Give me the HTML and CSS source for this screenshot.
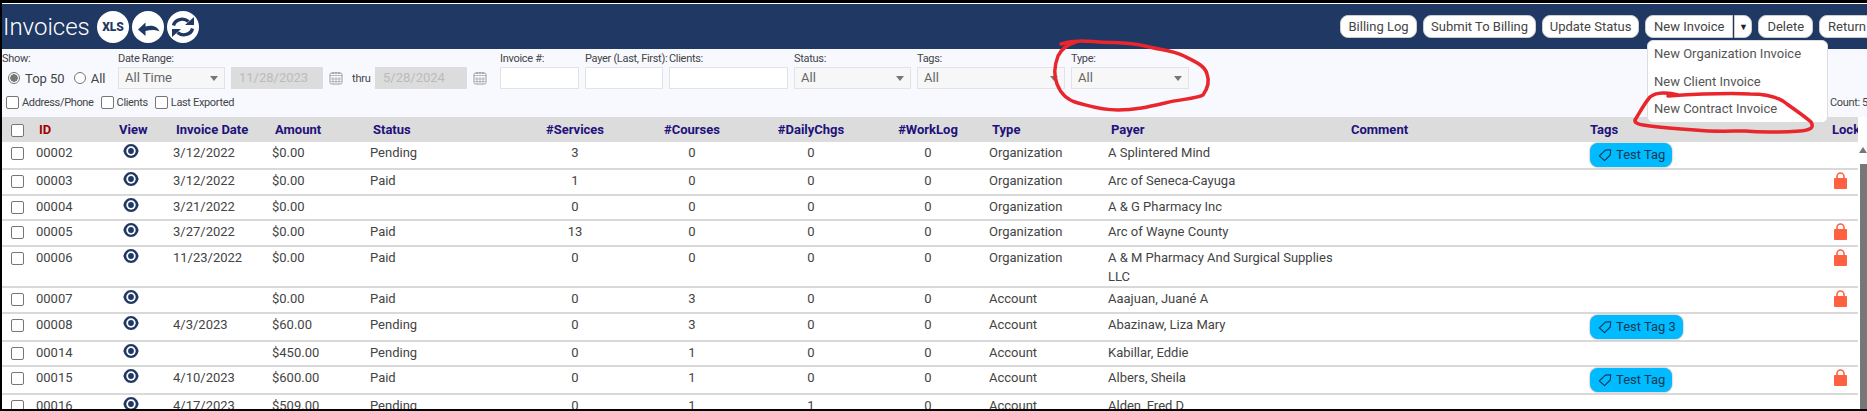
FILE: index.html
```html
<!DOCTYPE html>
<html lang="en">
<head>
    <meta charset="UTF-8">
    <title>Invoices</title>
    <link rel="stylesheet" href="styles.css">
</head>
<body>
    <svg width="0" height="0" class="defs">
        <symbol id="eye" viewBox="0 0 16 16">
            <path d="M8 1C3.800 1 1 4.600 .4 8 1 11.400 3.800 15 8 15s7-3.600 7.600-7C15 4.600 12.200 1 8 1z" fill="#1f3864"/>
            <circle cx="8" cy="8" r="4.700" fill="#fff"/>
            <circle cx="8" cy="8" r="2.900" fill="#1f3864"/>
        </symbol>
        <symbol id="lock" viewBox="0 0 13 17">
            <path d="M3 7V4.500a3.500 3.500 0 0 1 7 0V7" fill="none" stroke="#ff6040" stroke-width="1.600"/>
            <rect x="0" y="6" width="13" height="11" rx="1" fill="#ff6040"/>
        </symbol>
        <symbol id="tag" viewBox="0 0 16 16">
            <path d="M1.500 9 8.500 2.500 14.500 2 14 8 7.500 14.500z" fill="none" stroke="#123a52" stroke-width="1.300" stroke-linejoin="round"/>
        </symbol>
        <symbol id="cal" viewBox="0 0 14 14">
            <rect x="1" y="2" width="12" height="11" rx="1.500" fill="none" stroke="#999" stroke-width="1"/>
            <path d="M1 4.500h12M4 6v6M7 6v6M10 6v6M2 8h10M2 10.500h10" stroke="#aaa" stroke-width=".8"/>
            <path d="M4 1v2M7 1v2M10 1v2" stroke="#888" stroke-width="1"/>
        </symbol>
    </svg>

    <div class="frame">
        <header class="topbar">
            <h1>Invoices</h1>
            <span class="round-btn xls">XLS</span>
            <span class="round-btn">
                <svg width="32" height="32" viewBox="0 0 32 32"><path d="M6 18.500 13.500 11.500V15.500C19 14 25 14.500 27.500 20.500 23.500 18.500 19 18.500 13.500 20V25z" fill="#1f3864"/></svg>
            </span>
            <span class="round-btn">
                <svg width="32" height="32" viewBox="0 0 32 32"><path d="M6.500 14.500C8 8.500 16 6 21.500 10.500" fill="none" stroke="#1f3864" stroke-width="3.400"/><path d="M18 14H27V6z" fill="#1f3864"/><path d="M25.500 17.500C24 23.500 16 26 10.500 21.500" fill="none" stroke="#1f3864" stroke-width="3.400"/><path d="M14 18H5V26z" fill="#1f3864"/></svg>
            </span>
            <nav class="actions">
                <button class="btn b-log">Billing Log</button>
                <button class="btn b-submit">Submit To Billing</button>
                <button class="btn b-update">Update Status</button>
                <div class="split">
                    <button class="btn split-main">New Invoice</button>
                    <button class="btn split-arrow">▼</button>
                </div>
                <button class="btn">Delete</button>
                <button class="btn">Return</button>
            </nav>
        </header>

        <section class="filters">
            <div class="filter-row">
                <div class="field show-field">
                    <label>Show:</label>
                    <div class="radios">
                        <span class="radio on"></span><span class="radio-text">Top 50</span>
                        <span class="radio"></span><span class="radio-text">All</span>
                    </div>
                </div>
                <div class="field range-field">
                    <label>Date Range:</label>
                    <div class="range">
                        <div class="select range-select">All Time</div>
                        <div class="input disabled">11/28/2023</div>
                        <svg class="cal" width="14" height="14"><use href="#cal"/></svg>
                        <span class="thru">thru</span>
                        <div class="input disabled">5/28/2024</div>
                        <svg class="cal" width="14" height="14"><use href="#cal"/></svg>
                    </div>
                </div>
                <div class="field w-invoice"><label>Invoice #:</label><div class="input"></div></div>
                <div class="field w-payer"><label>Payer (Last, First):</label><div class="input"></div></div>
                <div class="field w-clients"><label>Clients:</label><div class="input"></div></div>
                <div class="field w-status"><label>Status:</label><div class="select">All</div></div>
                <div class="field w-tags"><label>Tags:</label><div class="select">All</div></div>
                <div class="field w-type"><label>Type:</label><div class="select">All</div></div>
            </div>
            <div class="extras">
                <span class="check"></span><span class="check-text">Address/Phone</span>
                <span class="check"></span><span class="check-text">Clients</span>
                <span class="check"></span><span class="check-text">Last Exported</span>
                <span class="count">Count: 5</span>
            </div>
        </section>

        <div class="table-wrap">
            <table class="grid">
                <colgroup>
                    <col class="c-check"><col class="c-id"><col class="c-view"><col class="c-date"><col class="c-amount">
                    <col class="c-status"><col class="c-services"><col class="c-courses"><col class="c-daily"><col class="c-worklog">
                    <col class="c-type"><col class="c-payer"><col class="c-comment"><col class="c-tags"><col class="c-lock">
                </colgroup>
                <thead>
                    <tr>
                        <th><span class="check"></span></th><th class="sorted">ID</th><th>View</th><th>Invoice Date</th><th>Amount</th><th>Status</th>
                        <th class="mid">#Services</th><th class="mid">#Courses</th><th class="mid">#DailyChgs</th><th class="mid">#WorkLog</th>
                        <th>Type</th><th>Payer</th><th>Comment</th><th>Tags</th><th>Lock</th>
                    </tr>
                </thead>
                <tbody id="rows"></tbody>
            </table>
            <div class="scrollbar"><span class="scroll-up"></span><span class="scroll-thumb"></span></div>
        </div>
    </div>

    <div class="menu">
        <a>New Organization Invoice</a>
        <a>New Client Invoice</a>
        <a>New Contract Invoice</a>
    </div>

    <svg class="marker" width="1867" height="411" viewBox="0 0 1867 411">
        <path d="M1061 44C1072 40 1085 41 1100 42 1115 43 1130 42 1145 46 1160 50 1172 50 1184 56 1196 62 1205 66 1207 74 1210 82 1208 88 1203 95 1196 99 1180 99 1165 103 1148 107 1135 110 1118 110 1100 110 1090 106 1078 103 1066 100 1060 92 1057 84 1053 74 1055 64 1058 56 1062 48 1068 44 1076 42" fill="none" stroke="#e8262b" stroke-width="3.500" stroke-linecap="round"/>
        <path d="M1678 95C1668 92 1656 92 1650 97 1644 104 1640 112 1635 120 1634 124 1642 125 1650 126 1665 128 1680 129 1695 130 1715 132 1730 131 1745 131 1765 133 1785 132 1800 131 1812 130 1814 127 1811 122 1803 115 1795 110 1787 104 1778 96 1765 94 1750 94 1730 93 1700 94 1668 96" fill="none" stroke="#e8262b" stroke-width="3.500" stroke-linecap="round"/>
    </svg>

    <script>
        // h = row height in the grid
        const invoices = [
            { h: 27, id: '00002', date: '3/12/2022', amount: '$0.00', status: 'Pending', s: 3, c: 0, d: 0, w: 0, type: 'Organization', payer: 'A Splintered Mind', tag: 'Test Tag' },
            { h: 26, id: '00003', date: '3/12/2022', amount: '$0.00', status: 'Paid', s: 1, c: 0, d: 0, w: 0, type: 'Organization', payer: 'Arc of Seneca-Cayuga', lock: true },
            { h: 25, id: '00004', date: '3/21/2022', amount: '$0.00', status: '', s: 0, c: 0, d: 0, w: 0, type: 'Organization', payer: 'A & G Pharmacy Inc' },
            { h: 26, id: '00005', date: '3/27/2022', amount: '$0.00', status: 'Paid', s: 13, c: 0, d: 0, w: 0, type: 'Organization', payer: 'Arc of Wayne County', lock: true },
            { h: 41, id: '00006', date: '11/23/2022', amount: '$0.00', status: 'Paid', s: 0, c: 0, d: 0, w: 0, type: 'Organization', payer: 'A & M Pharmacy And Surgical Supplies LLC', lock: true },
            { h: 26, id: '00007', date: '', amount: '$0.00', status: 'Paid', s: 0, c: 3, d: 0, w: 0, type: 'Account', payer: 'Aaajuan, Juané A', lock: true },
            { h: 28, id: '00008', date: '4/3/2023', amount: '$60.00', status: 'Pending', s: 0, c: 3, d: 0, w: 0, type: 'Account', payer: 'Abazinaw, Liza Mary', tag: 'Test Tag 3' },
            { h: 25, id: '00014', date: '', amount: '$450.00', status: 'Pending', s: 0, c: 1, d: 0, w: 0, type: 'Account', payer: 'Kabillar, Eddie' },
            { h: 27, id: '00015', date: '4/10/2023', amount: '$600.00', status: 'Paid', s: 0, c: 1, d: 0, w: 0, type: 'Account', payer: 'Albers, Sheila', tag: 'Test Tag', lock: true },
            { h: 26, id: '00016', date: '4/17/2023', amount: '$509.00', status: 'Pending', s: 0, c: 1, d: 1, w: 0, type: 'Account', payer: 'Alden, Fred D' }
        ];

        function esc(text) {
            return text.replace(/&/g, '&amp;');
        }

        document.getElementById('rows').innerHTML = invoices.map(function(row) {
            const tag = row.tag ? `<span class="tag"><svg width="14" height="14"><use href="#tag"/></svg>${row.tag}</span>` : '';
            const lock = row.lock ? '<svg class="lock" width="13" height="17"><use href="#lock"/></svg>' : '';
            return `<tr style="height:${row.h}px">
                <td><span class="check"></span></td>
                <td>${row.id}</td>
                <td><svg class="eye" width="16" height="16"><use href="#eye"/></svg></td>
                <td>${row.date}</td><td>${row.amount}</td><td>${row.status}</td>
                <td class="mid">${row.s}</td><td class="mid">${row.c}</td><td class="mid">${row.d}</td><td class="mid">${row.w}</td>
                <td>${row.type}</td><td>${esc(row.payer)}</td><td></td>
                <td class="tag-cell">${tag}</td><td class="lock-cell">${lock}</td>
            </tr>`;
        }).join('');
    </script>
</body>
</html>
```

FILE: styles.css
```css
:root {
    --navy: #1f3864;
    --panel-bg: #f8f9ff;
    --text: #444;
    --line: #d9d9d9;
}

* {
    box-sizing: border-box;
}

html, body {
    margin: 0;
    padding: 0;
    height: 411px;
    overflow: hidden;
    background: #fff;
    color: var(--text);
    font-family: Roboto, 'Liberation Sans', sans-serif;
    font-size: 13px;
}

.defs {
    position: absolute;
}

.frame {
    height: 411px;
    border-top: 3px solid #000;
    border-left: 2px solid #000;
    border-bottom: 2px solid #000;
    padding-top: 1px;
    display: flex;
    flex-direction: column;
    overflow: hidden;
}

/* top bar */
.topbar {
    flex: 0 0 45px;
    background: var(--navy);
    display: flex;
    align-items: center;
    padding-left: 1px;
}

h1 {
    margin: 0 10px 0 0;
    color: #fff;
    font-size: 24px;
    font-weight: 300;
    width: 84px;
    white-space: nowrap;
}

.round-btn {
    width: 32px;
    height: 32px;
    margin-right: 3px;
    border-radius: 50%;
    background: #fff;
    display: flex;
    align-items: center;
    justify-content: center;
}

.xls {
    color: var(--navy);
    font-size: 12px;
    font-weight: 900;
}

.actions {
    margin-left: auto;
    margin-right: -8px;
    display: flex;
    gap: 6px;
    align-items: center;
}

.btn {
    height: 23px;
    padding: 0 8px;
    border: 1px solid #ccc;
    border-radius: 8px;
    background: #fff;
    color: var(--text);
    font: 13px Roboto, sans-serif;
    white-space: nowrap;
}

.b-log { width: 77px; padding: 0; }
.b-submit { width: 113px; padding: 0; }
.b-update { width: 97px; padding: 0; }

.split {
    display: flex;
    gap: 1px;
}

.split-main {
    border-radius: 8px 0 0 8px;
}

.split-arrow {
    width: 18px;
    padding: 0;
    border-radius: 0 8px 8px 0;
    color: #222;
    font-size: 9px;
}

/* filters */
.filters {
    flex: 0 0 68px;
    background: var(--panel-bg);
    padding: 3px 0 0 0;
}

.filter-row {
    display: flex;
    gap: 6px;
}

.field label {
    display: block;
    height: 15px;
    line-height: 14px;
    font-size: 11px;
    letter-spacing: -.3px;
    white-space: nowrap;
}

.show-field {
    width: 110px;
}

.range {
    display: flex;
    align-items: center;
}

.radios {
    display: flex;
    align-items: center;
    height: 22px;
    padding-left: 6px;
    font-size: 13px;
}

.radio {
    width: 12px;
    height: 12px;
    border: 1px solid #767676;
    border-radius: 50%;
    background: #fff;
}

.radio.on {
    background: radial-gradient(circle, #777 0 3.500px, #fff 4px);
}

.radio-text {
    margin: 0 9px 0 5px;
}

.radio-text:last-child {
    margin-right: 0;
}

.input, .select {
    height: 22px;
    border: 1px solid #e3e3e3;
    background: #fff;
    line-height: 20px;
}

.select {
    position: relative;
    padding-left: 6px;
    background: #f7f7f7;
    font-size: 13px;
    color: #666;
}

.select::after {
    content: "";
    position: absolute;
    right: 6px;
    top: 8px;
    border: 4px solid transparent;
    border-top: 5px solid #777;
    border-bottom: 0;
}

.range-select {
    width: 107px;
    margin-right: 6px;
}

.disabled {
    width: 92px;
    padding-left: 7px;
    background: #dcdcdc;
    border-color: #dcdcdc;
    color: #bbb;
    font-size: 13px;
}

.cal {
    margin: 0 5px 0 6px;
}

.thru {
    width: 23px;
    margin-left: 4px;
    font-size: 11px;
    letter-spacing: -.2px;
}

.range-field {
    width: 376px;
}

.w-invoice { width: 79px; }
.w-payer { width: 78px; }
.w-clients { width: 119px; }
.w-status { width: 117px; }
.w-tags { width: 148px; }
.w-type { width: 118px; }

.extras {
    margin-top: 5px;
    padding-left: 4px;
    display: flex;
    align-items: center;
    height: 16px;
    font-size: 11px;
    letter-spacing: -.35px;
}

.check {
    display: inline-block;
    width: 13px;
    height: 13px;
    border: 1px solid #767676;
    border-radius: 2px;
    background: #fff;
    vertical-align: top;
}

.check-text {
    margin: 0 7px 0 3px;
}

.count {
    margin-left: auto;
    width: 37px;
    white-space: nowrap;
}

/* grid */
.table-wrap {
    flex: 1;
    position: relative;
    overflow: hidden;
}

.grid {
    width: 1856px;
    table-layout: fixed;
    border-collapse: collapse;
}

.c-check { width: 31px; }
.c-id { width: 80px; }
.c-view { width: 57px; }
.c-date { width: 99px; }
.c-amount { width: 98px; }
.c-status { width: 151px; }
.c-services { width: 114px; }
.c-courses { width: 120px; }
.c-daily { width: 118px; }
.c-worklog { width: 116px; }
.c-type { width: 119px; }
.c-payer { width: 240px; }
.c-comment { width: 239px; }
.c-tags { width: 242px; }
.c-lock { width: 32px; }

th {
    height: 25px;
    background: #dcdcdc;
    color: #22107a;
    font-size: 13px;
    font-weight: 700;
    text-align: left;
    padding: 0 0 0 6px;
    white-space: nowrap;
    overflow: hidden;
}

th.sorted {
    color: #a00000;
}

th:first-child, td:first-child {
    padding-left: 9px;
}

th .check {
    vertical-align: middle;
}

td {
    padding: 2px 3px 0;
    line-height: 18.500px;
    vertical-align: top;
    border-bottom: 2px solid var(--line);
    font-size: 13px;
}

th.mid, td.mid {
    padding: 0;
    text-align: center;
}

td.mid {
    padding-top: 2px;
}

td:first-child .check {
    margin-top: 3px;
}

.eye {
    display: block;
    margin: -1px 0 0 7px;
}

.tag-cell {
    padding: 0 0 0 6px;
}

.tag {
    display: inline-flex;
    align-items: center;
    gap: 4px;
    height: 24px;
    padding: 0 7px 0 8px;
    margin-top: 1px;
    border-radius: 8px;
    background: #00bbff;
    color: #123a52;
    box-shadow: 0 0 2px #888;
}

.lock-cell {
    padding-left: 8px;
}

.lock {
    display: block;
}

.scrollbar {
    position: absolute;
    top: 0;
    right: 0;
    width: 9px;
    bottom: 0;
    background: #fff;
}

.scroll-up {
    position: absolute;
    top: 30px;
    right: 0;
    border: 4px solid transparent;
    border-bottom: 6px solid #777;
    border-top: 0;
}

.scroll-thumb {
    position: absolute;
    top: 47px;
    right: 0;
    bottom: 0;
    width: 7px;
    background: #777;
}

/* dropdown + hand drawn marks sit over the page */
.menu {
    position: absolute;
    left: 1647px;
    top: 40px;
    width: 181px;
    height: 83px;
    background: #fff;
    border: 1px solid #ddd;
    border-radius: 6px;
}

.menu a {
    display: block;
    height: 27.500px;
    line-height: 25px;
    padding-left: 6px;
    color: #555;
}

.marker {
    position: absolute;
    left: 0;
    top: 0;
    pointer-events: none;
}
```
